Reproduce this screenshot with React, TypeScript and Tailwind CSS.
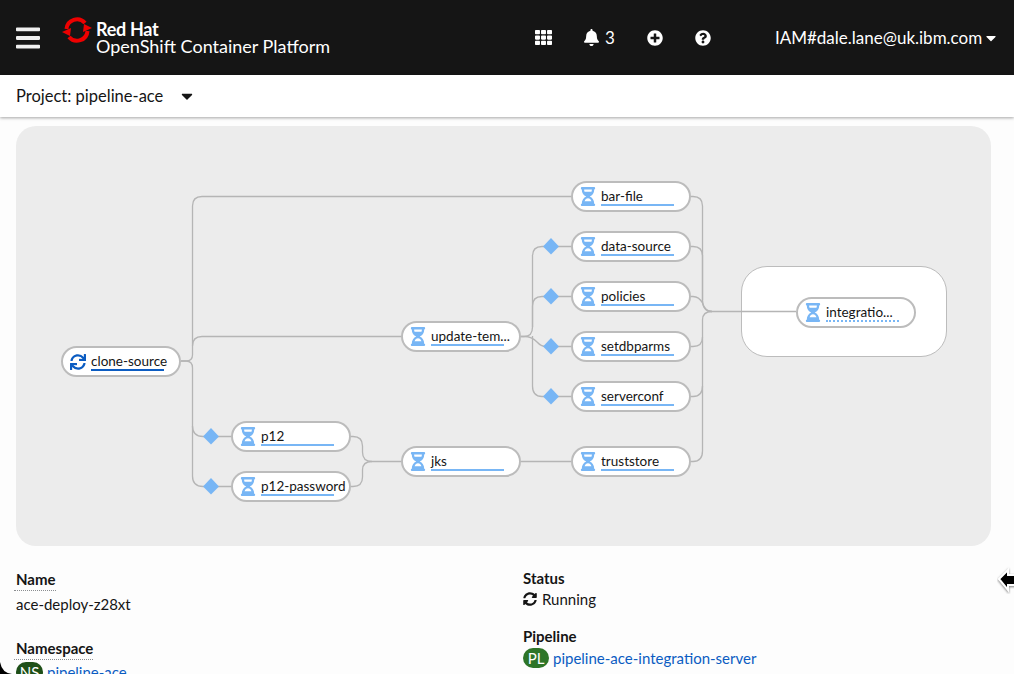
import React from "react";
import { FaBars, FaBell, FaCaretDown, FaHourglassHalf, FaPlusCircle, FaQuestionCircle, FaSync, FaSyncAlt, FaTh } from "react-icons/fa";

const font = { fontFamily: 'Lato, "Noto Sans", sans-serif' };

type N = { x: number; y: number; label: string; done?: boolean; dotted?: boolean };
const nodes: N[] = [
  { x: 61, y: 346, label: "clone-source", done: true },
  { x: 231, y: 421, label: "p12" },
  { x: 231, y: 471, label: "p12-password" },
  { x: 401, y: 321, label: "update-tem..." },
  { x: 401, y: 446, label: "jks" },
  { x: 571, y: 181, label: "bar-file" },
  { x: 571, y: 231, label: "data-source" },
  { x: 571, y: 281, label: "policies" },
  { x: 571, y: 331, label: "setdbparms" },
  { x: 571, y: 381, label: "serverconf" },
  { x: 571, y: 446, label: "truststore" },
  { x: 796, y: 297, label: "integratio...", dotted: true },
];

const edges = [
  "M181 361H186Q192.5 361 192.5 355V206Q192.5 196.500 202 196.500H571",
  "M192.500 346Q192.500 336.500 202 336.500H401",
  "M181 361H186Q192.500 361 192.500 368V426Q192.500 436.500 203 436.500H231",
  "M192.500 426V476Q192.500 486.500 203 486.500H231",
  "M351 436.500H353Q362.500 436.500 362.500 446V452Q362.500 461.500 372 461.500H401",
  "M351 486.500H353Q362.500 486.500 362.500 477V470Q362.500 461.500 372 461.500",
  "M521 461.500H571",
  "M521 336.500H524Q532.500 336.500 532.500 327V256Q532.500 246.500 542 246.500H571",
  "M532.500 327V306Q532.500 296.500 542 296.500H571",
  "M521 336.500H524Q532 336.500 537 342Q541 346.500 546 346.500H571",
  "M532.500 336V386Q532.500 396.500 542 396.500H571",
  "M691 196.500H693Q702.500 196.500 702.500 206V300Q702.500 311.500 712 311.500H796",
  "M691 246.500H693Q702.500 246.500 702.500 256V300",
  "M691 296.500H693Q699 296.500 702.500 303Q705 311.500 712 311.500",
  "M691 346.500H693Q702.500 346.500 702.500 337V320Q702.500 311.500 712 311.500",
  "M702.500 337V386Q702.500 396.500 693 396.500H691",
  "M702.500 386V451Q702.500 461.500 693 461.500H691",
];

const diamonds = [[211, 436], [211, 486], [551, 246], [551, 296], [551, 346], [551, 396]];

function Pill({ n }: { n: N }) {
  const color = n.done ? "#0b5cc2" : "#78b6f5";
  return (
    <div
      className="absolute w-[120px] h-[31px] rounded-full bg-white border-2 border-[#bcbcbc]"
      style={{ left: n.x - 16, top: n.y - 126 }}
    >
      <div className="absolute left-[7px] top-[5px] w-[16px] h-[17px] flex items-center justify-center">
        {n.done ? <FaSync size={22} color={color} /> : <FaHourglassHalf size={19} color={color} />}
      </div>
      <span className="absolute left-[28px] top-[3px] text-[13.500px] leading-[20px] text-[#151515] whitespace-nowrap">{n.label}</span>
      <div
        className={n.dotted ? "absolute left-[28px] top-[21px] w-[73px] h-[2px] border-t-2 border-dotted border-[#78b6f5]" : "absolute left-[28px] top-[21px] w-[73px] h-[2px]"}
        style={n.dotted ? undefined : { backgroundColor: color }}
      />
    </div>
  );
}

function Logo() {
  return (
    <svg width="30" height="30" viewBox="0 0 30 30" className="shrink-0">
      <path d="M4.500 14A10.500 10.500 0 0 1 23 8" fill="none" stroke="#ee0000" strokeWidth="4" />
      <path d="M25.500 16A10.500 10.500 0 0 1 7 22" fill="none" stroke="#ee0000" strokeWidth="4" />
      <path d="M0 17L9 13L8 21Z" fill="#ee0000" />
      <path d="M30 13L21 17L22 9Z" fill="#ee0000" />
    </svg>
  );
}

function Label({ children, dotted }: { children: React.ReactNode; dotted?: boolean }) {
  return (
    <div className="text-[15px] leading-[20px] font-bold text-[#151515]">
      <span className={dotted ? "inline-block border-b border-dotted border-[#8a8d90] pb-[1px] pl-[2px] -ml-[2px]" : ""}>{children}</span>
    </div>
  );
}

export default function App() {
  return (
    <div className="relative w-[1014px] h-[674px] overflow-hidden bg-[#fdfdfd] flex flex-col" style={font}>
      <header className="h-[75px] shrink-0 bg-[#151515] text-white flex items-center">
        <FaBars size={24} className="ml-[16px] text-[#f0f0f0]" style={{ width: 24, height: 28 }} />
        <div className="ml-[22px] flex items-start relative w-[270px] h-[50px]">
          <div className="absolute left-0 top-[2px]"><Logo /></div>
          <div className="absolute left-[34px] top-[6px] text-[18px] leading-[20px] font-bold tracking-[-0.3px]">Red Hat</div>
          <div className="absolute left-[34px] top-[22px] text-[18px] leading-[22px] whitespace-nowrap">OpenShift Container Platform</div>
        </div>
        <div className="ml-[203px] flex items-center">
          <FaTh size={17} />
          <FaBell size={17} className="ml-[31px]" />
          <span className="ml-[5px] text-[17px] leading-[20px]">3</span>
          <FaPlusCircle size={16} className="ml-[32px]" />
          <FaQuestionCircle size={16} className="ml-[32px]" />
          <span className="ml-[64px] text-[17px] leading-[20px] whitespace-nowrap">IAM#dale.lane@uk.ibm.com</span>
          <FaCaretDown size={16} className="ml-[1px]" />
        </div>
      </header>

      <div className="relative h-[42px] shrink-0 bg-white shadow-[0_1px_3px_rgba(0,0,0,0.35)] flex items-center pl-[16px] text-[16.500px] text-[#151515]">
        <span>Project: pipeline-ace</span>
        <FaCaretDown size={18} className="ml-[15px]" />
      </div>

      <div className="relative mx-[16px] mt-[9px] h-[420px] w-[975px] shrink-0 rounded-[20px] bg-[#ececec]">
        <div className="absolute left-[725px] top-[140px] w-[206px] h-[91px] rounded-[26px] bg-white border-[1.5px] border-[#bcbcbc]" />
        <svg width="975" height="420" viewBox="16 126 975 420" className="absolute left-0 top-0" fill="none">
          {edges.map((d, i) => (
            <path key={i} d={d} stroke="#b5b5b5" strokeWidth="1.300" />
          ))}
          {diamonds.map(([x, y], i) => (
            <path key={i} d={`M${x} ${y - 8}L${x + 8} ${y + 0.5}L${x} ${y + 8.500}L${x - 8} ${y + 0.5}Z`} fill="#78b6f5" />
          ))}
        </svg>
        {nodes.map((n) => (
          <Pill key={n.label} n={n} />
        ))}
      </div>

      <div className="grid grid-cols-[507px_1fr] pl-[16px] pt-[23px] text-[15px] text-[#151515]">
        <div className="flex flex-col">
          <Label dotted>Name</Label>
          <div className="mt-[3px] leading-[20px]">ace-deploy-z28xt</div>
          <div className="mt-[24px]"><Label dotted>Namespace</Label></div>
          <div className="mt-[2px] flex items-center h-[20px] shrink-0">
            <span className="w-[27px] h-[20px] rounded-full bg-[#1e4f18] text-white text-[15px] leading-[20px] text-center">NS</span>
            <span className="ml-[4px] text-[#0b5cc2]">pipeline-ace</span>
          </div>
        </div>
        <div className="flex flex-col -mt-[1px]">
          <Label>Status</Label>
          <div className="mt-[1px] flex items-center leading-[20px]">
            <FaSyncAlt size={14} />
            <span className="ml-[5px]">Running</span>
          </div>
          <div className="mt-[17px]"><Label>Pipeline</Label></div>
          <div className="mt-[1px] flex items-center">
            <span className="w-[26px] h-[20px] rounded-full bg-[#2e7528] text-white text-[15px] leading-[20px] text-center">PL</span>
            <span className="ml-[4px] text-[#0b5cc2]">pipeline-ace-integration-server</span>
          </div>
        </div>
      </div>

      <svg width="20" height="28" viewBox="0 0 20 28" className="absolute left-[997px] top-[566px]">
        <path d="M2 13L11 4V9H20V19H11V24Z" fill="#000" stroke="#fff" strokeWidth="2" style={{ filter: "drop-shadow(0 1px 1px rgba(0,0,0,0.5))" }} />
      </svg>
      <svg width="12" height="12" viewBox="0 0 12 12" className="absolute left-0 top-[662px]">
        <path d="M0 0V12H12Q2 11 0 0Z" fill="#000" />
      </svg>
    </div>
  );
}
